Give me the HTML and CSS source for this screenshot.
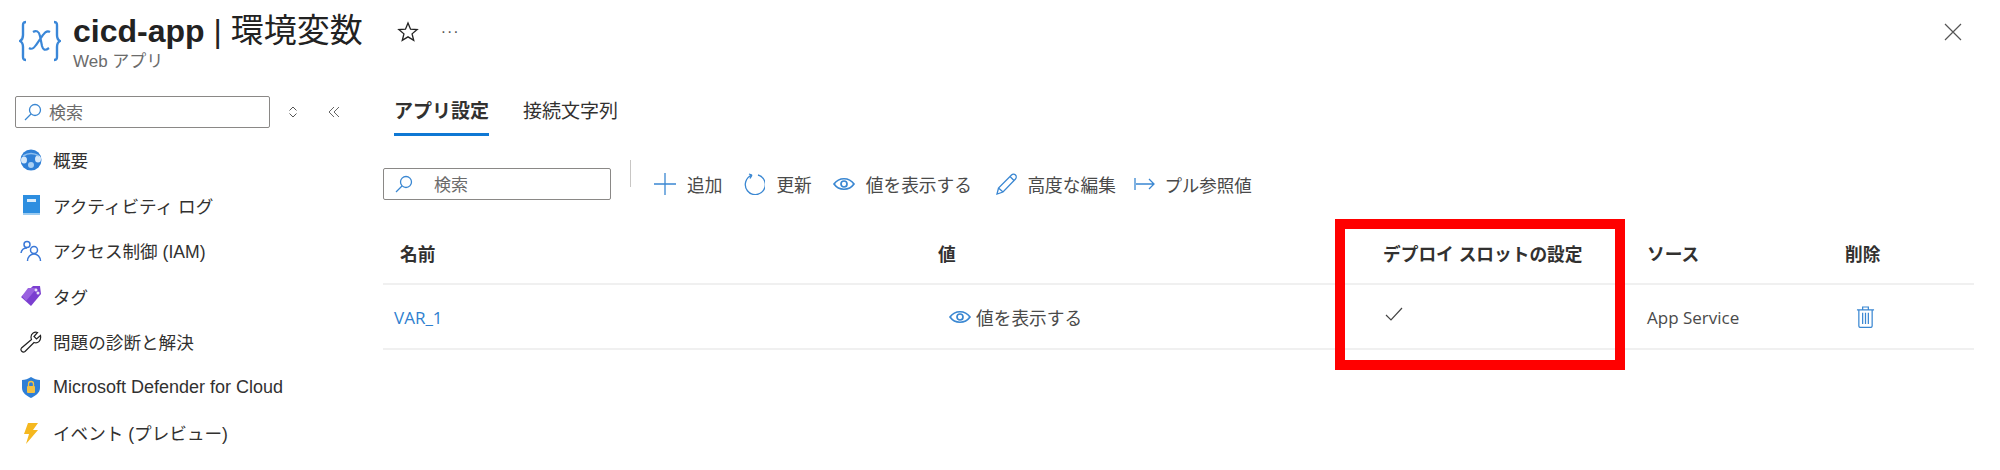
FILE: index.html
```html
<!DOCTYPE html>
<html lang="ja">
<head>
<meta charset="utf-8">
<title>cicd-app | 環境変数</title>
<link rel="stylesheet" href="styles.css">
</head>
<body>
<header class="header">
  <svg class="logo" viewBox="0 0 42 42" fill="none" stroke="#3a87d8"><path d="M7 2C3.500 2 4 4 4 8v7c0 3-1 5-3 6 2 1 3 3 3 6v7c0 4-.5 6 3 6M35 2c3.500 0 3 2 3 6v7c0 3 1 5 3 6-2 1-3 3-3 6v7c0 4 .5 6-3 6" stroke-width="2.400"/><path d="M14 12c3-2 6-1 7 4l2 10c1 4 3 5 7 2M31 12c-3-2-5 0-7 3l-7 10c-2 3-4 5-7 3" stroke-width="2.200"/></svg>
  <div class="titles">
    <h1 class="title"><b>cicd-app</b> | <span class="title-ja">環境変数</span></h1>
    <div class="subtitle">Web アプリ</div>
  </div>
  <svg class="star" viewBox="0 0 20 20"><path d="M10 1.800l2.300 5.600 6 .4-4.600 3.900 1.500 5.900L10 14.400l-5.200 3.200 1.500-5.900L1.700 7.800l6-.4z" fill="none" stroke="#222" stroke-width="1.200"/></svg>
  <div class="dots">···</div>
  <svg class="close" viewBox="0 0 18 18"><path d="M1 1l16 16M17 1L1 17" stroke="#555" stroke-width="1.200"/></svg>
</header>

<div class="body">
  <aside class="side">
    <div class="side-top">
      <div class="search side-search">
        <svg class="glass" viewBox="0 0 18 18"><circle cx="11" cy="7" r="5.500" fill="none" stroke="#3a87d2" stroke-width="1.300"/><path d="M7 11l-6 6" stroke="#3a87d2" stroke-width="1.300"/></svg>
        <span class="search-text">検索</span>
      </div>
      <svg class="updown" viewBox="0 0 10 14"><path d="M1.500 5.500L5 2l3.500 3.500M1.500 8.500L5 12l3.500-3.500" fill="none" stroke="#555" stroke-width="1"/></svg>
      <svg class="collapse" viewBox="0 0 12 12"><path d="M6 1L1 6l5 5M11 1L6 6l5 5" fill="none" stroke="#666" stroke-width="1"/></svg>
    </div>
    <nav class="menu">
      <a class="item"><svg class="ico" viewBox="0 0 22 22"><circle cx="11" cy="11" r="10.500" fill="#2f7fd6"/><ellipse cx="4" cy="11" rx="3" ry="3.500" fill="#d6e8fa"/><ellipse cx="18" cy="10" rx="3" ry="3.500" fill="#d6e8fa"/><circle cx="11" cy="16" r="3" fill="#a9cff3"/><path d="M3 7c5-3 11-3 16 0" fill="none" stroke="#8fc0ef" stroke-width="1.500"/></svg>概要</a>
      <a class="item"><svg class="ico" viewBox="0 0 22 22"><rect x="3" y="1" width="17" height="20" fill="#2d8ee0"/><rect x="3" y="19" width="17" height="2" fill="#9ccbf0"/><rect x="7" y="5" width="9" height="3" fill="#d9ecfb"/></svg>アクティビティ ログ</a>
      <a class="item"><svg class="ico" viewBox="0 0 22 22"><g fill="none" stroke="#3a78d8" stroke-width="1.500"><circle cx="7" cy="4.500" r="3"/><path d="M1 13c.5-3 3-5 6-5"/><circle cx="14" cy="10" r="3.500"/><path d="M7.500 21c0-4 3-7 6.500-7s6.500 3 6.500 7"/></g></svg>アクセス制御 (IAM)</a>
      <a class="item"><svg class="ico" viewBox="0 0 22 22"><path d="M13 1h7l1 8-10 12L1 12z" fill="#7b3fd0"/><path d="M8 3h9L6 16 2 11z" fill="#9a62e0"/><circle cx="16" cy="5" r="1.500" fill="#e8e0f5"/><circle cx="18" cy="8" r="1.500" fill="#e8e0f5"/></svg>タグ</a>
      <a class="item"><svg class="ico" viewBox="0 0 22 22"><path d="M20.500 4.500l-4 3.500-2.500-2.500 3.500-4c-3-1-6.500 1-6.500 4.500 0 1 .2 1.500.5 2.500L1.500 17a2.500 2.500 0 0 0 3.500 3.500l9-9c3.500 1.500 7.500-1.500 6.500-7z" fill="none" stroke="#222" stroke-width="1.200"/></svg>問題の診断と解決</a>
      <a class="item item-en"><svg class="ico" viewBox="0 0 22 22"><path d="M11 1c3 2 6 3 9 3v8c0 5-5 8-9 10-4-2-9-5-9-10V4c3 0 6-1 9-3z" fill="#2f7fd6"/><rect x="7" y="10" width="8" height="7" rx="1" fill="#f5c242"/><path d="M8.500 10V8a2.500 2.500 0 0 1 5 0v2" fill="none" stroke="#f5c242" stroke-width="1.300"/></svg>Microsoft Defender for Cloud</a>
      <a class="item"><svg class="ico" viewBox="0 0 22 22"><path d="M8 1h10l-5 7h5L6 22l3-10H4z" fill="#f5b81f"/></svg>イベント (プレビュー)</a>
    </nav>
  </aside>

  <main class="main">
    <div class="tabs">
      <span class="tab active">アプリ設定</span>
      <span class="tab">接続文字列</span>
    </div>
    <div class="toolbar">
      <div class="search main-search">
        <svg class="glass" viewBox="0 0 18 18"><circle cx="11" cy="7" r="5.500" fill="none" stroke="#3a87d2" stroke-width="1.300"/><path d="M7 11l-6 6" stroke="#3a87d2" stroke-width="1.300"/></svg>
        <span class="search-text">検索</span>
      </div>
      <div class="sep"></div>
      <div class="actions">
        <span class="act"><svg class="act-ico" viewBox="0 0 22 22"><path d="M11 0v22M0 11h22" stroke="#3a87d2" stroke-width="1.300"/></svg>追加</span>
        <span class="act"><svg class="act-ico" viewBox="0 0 22 22"><path d="M9 2.200A10 10 0 1 0 15 2M9 2.200L6 1M9 2.200L7 5.500" fill="none" stroke="#3a87d2" stroke-width="1.300"/></svg>更新</span>
        <span class="act"><svg class="act-ico" viewBox="0 0 22 14"><path d="M1 7c5-7 15-7 20 0-5 7-15 7-20 0z" fill="none" stroke="#3a87d2" stroke-width="1.700"/><circle cx="11" cy="7" r="3" fill="none" stroke="#3a87d2" stroke-width="1.700"/></svg>値を表示する</span>
        <span class="act act-edit"><svg class="act-ico" viewBox="0 0 22 22"><path d="M1 21l1.500-6L15.500 2c1-1 3-1 4 0s1 3 0 4L7 19zM14 3.500l4.500 4.500M2.500 15L7 19" fill="none" stroke="#3a87d2" stroke-width="1.300"/></svg>高度な編集</span>
        <span class="act act-pull"><svg class="act-ico" viewBox="0 0 22 14"><path d="M1 1v12M2 7h18M15 2l5 5-5 5" fill="none" stroke="#3a87d2" stroke-width="1.300"/></svg>プル参照値</span>
      </div>
    </div>
    <div class="table">
      <div class="row head">
        <div class="cell c-name">名前</div>
        <div class="cell c-value">値</div>
        <div class="cell c-slot">デプロイ スロットの設定</div>
        <div class="cell c-source">ソース</div>
        <div class="cell c-del">削除</div>
      </div>
      <div class="row data">
        <div class="cell c-name link">VAR_1</div>
        <div class="cell c-value show"><svg class="eye" viewBox="0 0 22 14"><path d="M1 7c5-7 15-7 20 0-5 7-15 7-20 0z" fill="none" stroke="#3a87d2" stroke-width="1.700"/><circle cx="11" cy="7" r="3" fill="none" stroke="#3a87d2" stroke-width="1.700"/></svg>値を表示する</div>
        <div class="cell c-slot check"><svg class="tick" viewBox="0 0 18 14"><path d="M1 8l5 5L17 1" fill="none" stroke="#444" stroke-width="1.200"/></svg></div>
        <div class="cell c-source src">App Service</div>
        <div class="cell c-del trash"><svg class="bin" viewBox="0 0 20 24"><path d="M1 5h18M7 5V2h6v3M3 5v17c0 1 .5 1.500 1.500 1.500h11c1 0 1.500-.5 1.500-1.500V5M7 8v12M10 8v12M13 8v12" fill="none" stroke="#3a87d2" stroke-width="1.300"/></svg></div>
      </div>
      <div class="highlight"></div>
    </div>
  </main>
</div>
</body>
</html>
```
FILE: styles.css
```css
* { box-sizing: border-box; }
html, body { margin: 0; height: 100%; }
body {
  width: 2000px;
  height: 470px;
  overflow: hidden;
  background: #fff;
  color: #323130;
  font-family: "Liberation Sans", "Noto Sans CJK JP", sans-serif;
  font-size: 18px;
}
.header {
  display: flex;
  align-items: flex-start;
  height: 96px;
  padding: 10px 38px 0 19px;
}
.logo { width: 42px; height: 42px; margin-top: 10px; flex: none; }
.titles { margin-left: 12px; }
.title { margin: 0; font-size: 32px; font-weight: 400; line-height: 42px; color: #222; white-space: nowrap; }
.title b { font-weight: 700; }
.title-ja { font-size: 33px; }
.subtitle { font-size: 17px; line-height: 20px; color: #6b6b6b; }
.star { width: 22px; height: 22px; margin: 11px 0 0 34px; flex: none; }
.dots { margin: 9px 0 0 22px; color: #555; font-size: 16px; letter-spacing: 1px; line-height: 26px; }
.close { width: 18px; height: 18px; margin: 13px 0 0 auto; flex: none; }

.body { display: flex; }
.side { width: 383px; flex: none; padding-left: 15px; }
.side-top { display: flex; align-items: center; height: 32px; }
.search {
  display: flex;
  align-items: center;
  height: 32px;
  border: 1px solid #8a8886;
  border-radius: 2px;
  color: #6b6b6b;
  font-size: 17px;
}
.search-text { margin-bottom: 2px; }
.side-search { width: 255px; padding-left: 8px; }
.side-search .glass { margin-right: 7px; }
.main-search { width: 228px; padding-left: 11px; }
.main-search .glass { margin-right: 21px; }
.glass { width: 18px; height: 18px; flex: none; }
.updown { width: 10px; height: 14px; margin-left: 18px; flex: none; }
.collapse { width: 12px; height: 12px; margin-left: 30px; flex: none; }
.menu { display: flex; flex-direction: column; margin-top: 9px; }
.item { display: flex; align-items: center; height: 45.500px; font-size: 17.600px; color: #323130; white-space: nowrap; }
.item-en { font-size: 18px; }
.ico { width: 22px; height: 22px; margin: 0 11px 0 5px; flex: none; }

.main { flex: 1; margin-top: -3px; padding-right: 26px; }
.tabs { display: flex; gap: 34px; padding-left: 11px; height: 43px; }
.tab { font-size: 19px; line-height: 38px; color: #323130; height: 43px; }
.tab.active { font-weight: 700; border-bottom: 3px solid #0f78d4; }
.toolbar { display: flex; align-items: flex-start; margin-top: 32px; }
.sep { width: 1px; height: 27px; margin: -8px 0 0 19px; background: #c8c6c4; }
.actions { display: flex; gap: 21px; margin-left: 23px; height: 32px; align-items: center; }
.act { display: flex; align-items: center; gap: 11px; font-size: 17.700px; color: #4a4a4a; white-space: nowrap; }
.act-edit { gap: 9.500px; margin-left: 3px; margin-right: -2.500px; }
.act-pull { gap: 8px; font-size: 17.500px; }
.act-ico { width: 22px; height: 22px; flex: none; }

.table { position: relative; margin-top: 22px; }
.row { display: grid; grid-template-columns: 555px 445px 264px 180px 1fr; align-items: center; border-bottom: 2px solid #f0f0f0; }
.head { height: 63px; font-size: 17.700px; font-weight: 700; color: #323130; }
.head .c-name { padding-left: 17px; }
.head .c-del { padding-left: 18px; }
.data { height: 65px; font-size: 17.500px; }
.cell { white-space: nowrap; }
.data .c-name { padding-left: 11px; padding-top: 1px; font-family: "Open Sans", sans-serif; font-size: 17px; }
.link { color: #2f7fcf; }
.show { display: flex; align-items: center; gap: 5px; padding-left: 11px; color: #4a4a4a; font-size: 17.700px; }
.eye { width: 22px; height: 14px; flex: none; }
.check { display: flex; padding-left: 2px; margin-top: -6px; }
.tick { width: 18px; height: 14px; }
.src { padding-top: 1px; font-family: "Open Sans", sans-serif; font-size: 17px; color: #4a4a4a; }
.trash { display: flex; padding-left: 29px; }
.bin { width: 19px; height: 23px; }
.highlight { position: absolute; left: 952px; top: -3px; width: 290px; height: 151px; border: 10px solid #ff0000; pointer-events: none; }
```
